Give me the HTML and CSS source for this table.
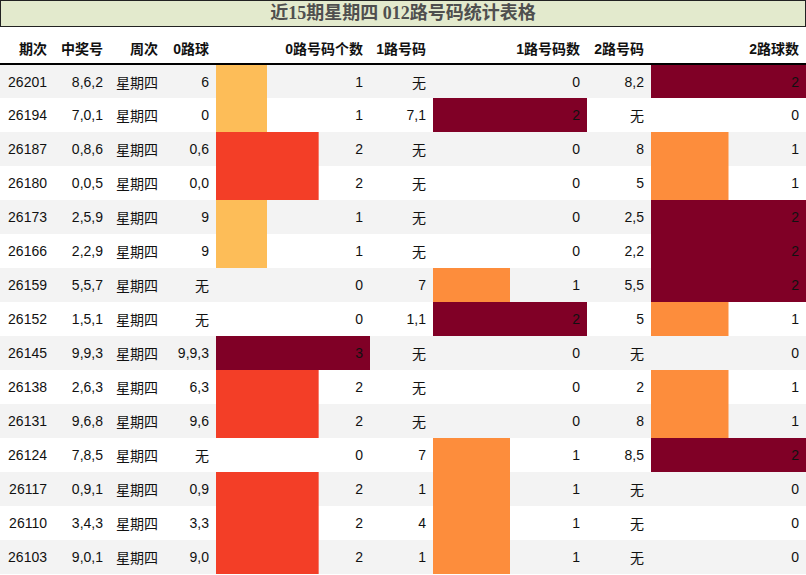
FILE: index.html
```html
<!DOCTYPE html>
<html lang="zh">
<head>
<meta charset="utf-8">
<title>近15期星期四 012路号码统计表格</title>
<link rel="stylesheet" href="styles.css">
</head>
<body>
<div class="title">近15期星期四 012路号码统计表格</div>
<table class="stats">
<colgroup>
<col class="c1"><col class="c2"><col class="c3"><col class="c4"><col class="c5"><col class="c6"><col class="c7"><col class="c8"><col class="c9">
</colgroup>
<thead>
<tr><th>期次</th><th>中奖号</th><th>周次</th><th>0路球</th><th>0路号码个数</th><th>1路号码</th><th>1路号码数</th><th>2路号码</th><th>2路球数</th></tr>
</thead>
<tbody>
<tr><td>26201</td><td>8,6,2</td><td>星期四</td><td>6</td><td class="bar y" style="background-size:33.333% 100%">1</td><td>无</td><td class="bar">0</td><td>8,2</td><td class="bar m" style="background-size:100% 100%">2</td></tr>
<tr><td>26194</td><td>7,0,1</td><td>星期四</td><td>0</td><td class="bar y" style="background-size:33.333% 100%">1</td><td>7,1</td><td class="bar m" style="background-size:100% 100%">2</td><td>无</td><td class="bar">0</td></tr>
<tr><td>26187</td><td>0,8,6</td><td>星期四</td><td>0,6</td><td class="bar r" style="background-size:66.667% 100%">2</td><td>无</td><td class="bar">0</td><td>8</td><td class="bar o" style="background-size:50% 100%">1</td></tr>
<tr><td>26180</td><td>0,0,5</td><td>星期四</td><td>0,0</td><td class="bar r" style="background-size:66.667% 100%">2</td><td>无</td><td class="bar">0</td><td>5</td><td class="bar o" style="background-size:50% 100%">1</td></tr>
<tr><td>26173</td><td>2,5,9</td><td>星期四</td><td>9</td><td class="bar y" style="background-size:33.333% 100%">1</td><td>无</td><td class="bar">0</td><td>2,5</td><td class="bar m" style="background-size:100% 100%">2</td></tr>
<tr><td>26166</td><td>2,2,9</td><td>星期四</td><td>9</td><td class="bar y" style="background-size:33.333% 100%">1</td><td>无</td><td class="bar">0</td><td>2,2</td><td class="bar m" style="background-size:100% 100%">2</td></tr>
<tr><td>26159</td><td>5,5,7</td><td>星期四</td><td>无</td><td class="bar">0</td><td>7</td><td class="bar o" style="background-size:50% 100%">1</td><td>5,5</td><td class="bar m" style="background-size:100% 100%">2</td></tr>
<tr><td>26152</td><td>1,5,1</td><td>星期四</td><td>无</td><td class="bar">0</td><td>1,1</td><td class="bar m" style="background-size:100% 100%">2</td><td>5</td><td class="bar o" style="background-size:50% 100%">1</td></tr>
<tr><td>26145</td><td>9,9,3</td><td>星期四</td><td>9,9,3</td><td class="bar m" style="background-size:100% 100%">3</td><td>无</td><td class="bar">0</td><td>无</td><td class="bar">0</td></tr>
<tr><td>26138</td><td>2,6,3</td><td>星期四</td><td>6,3</td><td class="bar r" style="background-size:66.667% 100%">2</td><td>无</td><td class="bar">0</td><td>2</td><td class="bar o" style="background-size:50% 100%">1</td></tr>
<tr><td>26131</td><td>9,6,8</td><td>星期四</td><td>9,6</td><td class="bar r" style="background-size:66.667% 100%">2</td><td>无</td><td class="bar">0</td><td>8</td><td class="bar o" style="background-size:50% 100%">1</td></tr>
<tr><td>26124</td><td>7,8,5</td><td>星期四</td><td>无</td><td class="bar">0</td><td>7</td><td class="bar o" style="background-size:50% 100%">1</td><td>8,5</td><td class="bar m" style="background-size:100% 100%">2</td></tr>
<tr><td>26117</td><td>0,9,1</td><td>星期四</td><td>0,9</td><td class="bar r" style="background-size:66.667% 100%">2</td><td>1</td><td class="bar o" style="background-size:50% 100%">1</td><td>无</td><td class="bar">0</td></tr>
<tr><td>26110</td><td>3,4,3</td><td>星期四</td><td>3,3</td><td class="bar r" style="background-size:66.667% 100%">2</td><td>4</td><td class="bar o" style="background-size:50% 100%">1</td><td>无</td><td class="bar">0</td></tr>
<tr><td>26103</td><td>9,0,1</td><td>星期四</td><td>9,0</td><td class="bar r" style="background-size:66.667% 100%">2</td><td>1</td><td class="bar o" style="background-size:50% 100%">1</td><td>无</td><td class="bar">0</td></tr>
</tbody>
</table>
</body>
</html>
```

FILE: styles.css
```css
html, body {
  margin: 0;
  padding: 0;
  background: #ffffff;
}

body {
  width: 806px;
  font-family: "Liberation Sans", Arial, "Noto Sans CJK SC", sans-serif;
  font-size: 14px;
  color: #111;
}

.title {
  box-sizing: border-box;
  height: 27px;
  border: 1px solid #222;
  background: #e3eacd;
  color: #4f4f4f;
  font-family: "Liberation Serif", "Noto Sans CJK SC", serif;
  font-weight: bold;
  font-size: 18px;
  line-height: 25px;
  text-align: center;
}

.stats {
  width: 806px;
  table-layout: fixed;
  border-collapse: collapse;
  border-spacing: 0;
}

.c1 { width: 54px; }
.c2 { width: 56px; }
.c3 { width: 55px; }
.c4 { width: 51px; }
.c5 { width: 154px; }
.c6 { width: 63px; }
.c7 { width: 154px; }
.c8 { width: 64px; }
.c9 { width: 155px; }

.stats th {
  height: 37px;
  padding: 5px 7px 0 0;
  box-sizing: border-box;
  font-weight: bold;
  text-align: right;
  border-bottom: 2px solid #000;
  color: #111;
  font-family: "Liberation Sans", Arial, "Noto Sans CJK SC", sans-serif;
}

.stats td {
  height: 34px;
  padding: 0 7px 0 0;
  box-sizing: border-box;
  text-align: right;
  white-space: nowrap;
}

.stats tbody tr:nth-child(odd) td {
  background-color: #f3f3f3;
}

.stats tbody tr:nth-child(even) td {
  background-color: #ffffff;
}

.stats td.bar {
  background-repeat: no-repeat;
  background-position: left top;
}

.stats td.y { background-image: linear-gradient(#fdbd58, #fdbd58); }
.stats td.r { background-image: linear-gradient(#f33e27, #f33e27); }
.stats td.o { background-image: linear-gradient(#fd8d3c, #fd8d3c); }
.stats td.m { background-image: linear-gradient(#800026, #800026); }
```
